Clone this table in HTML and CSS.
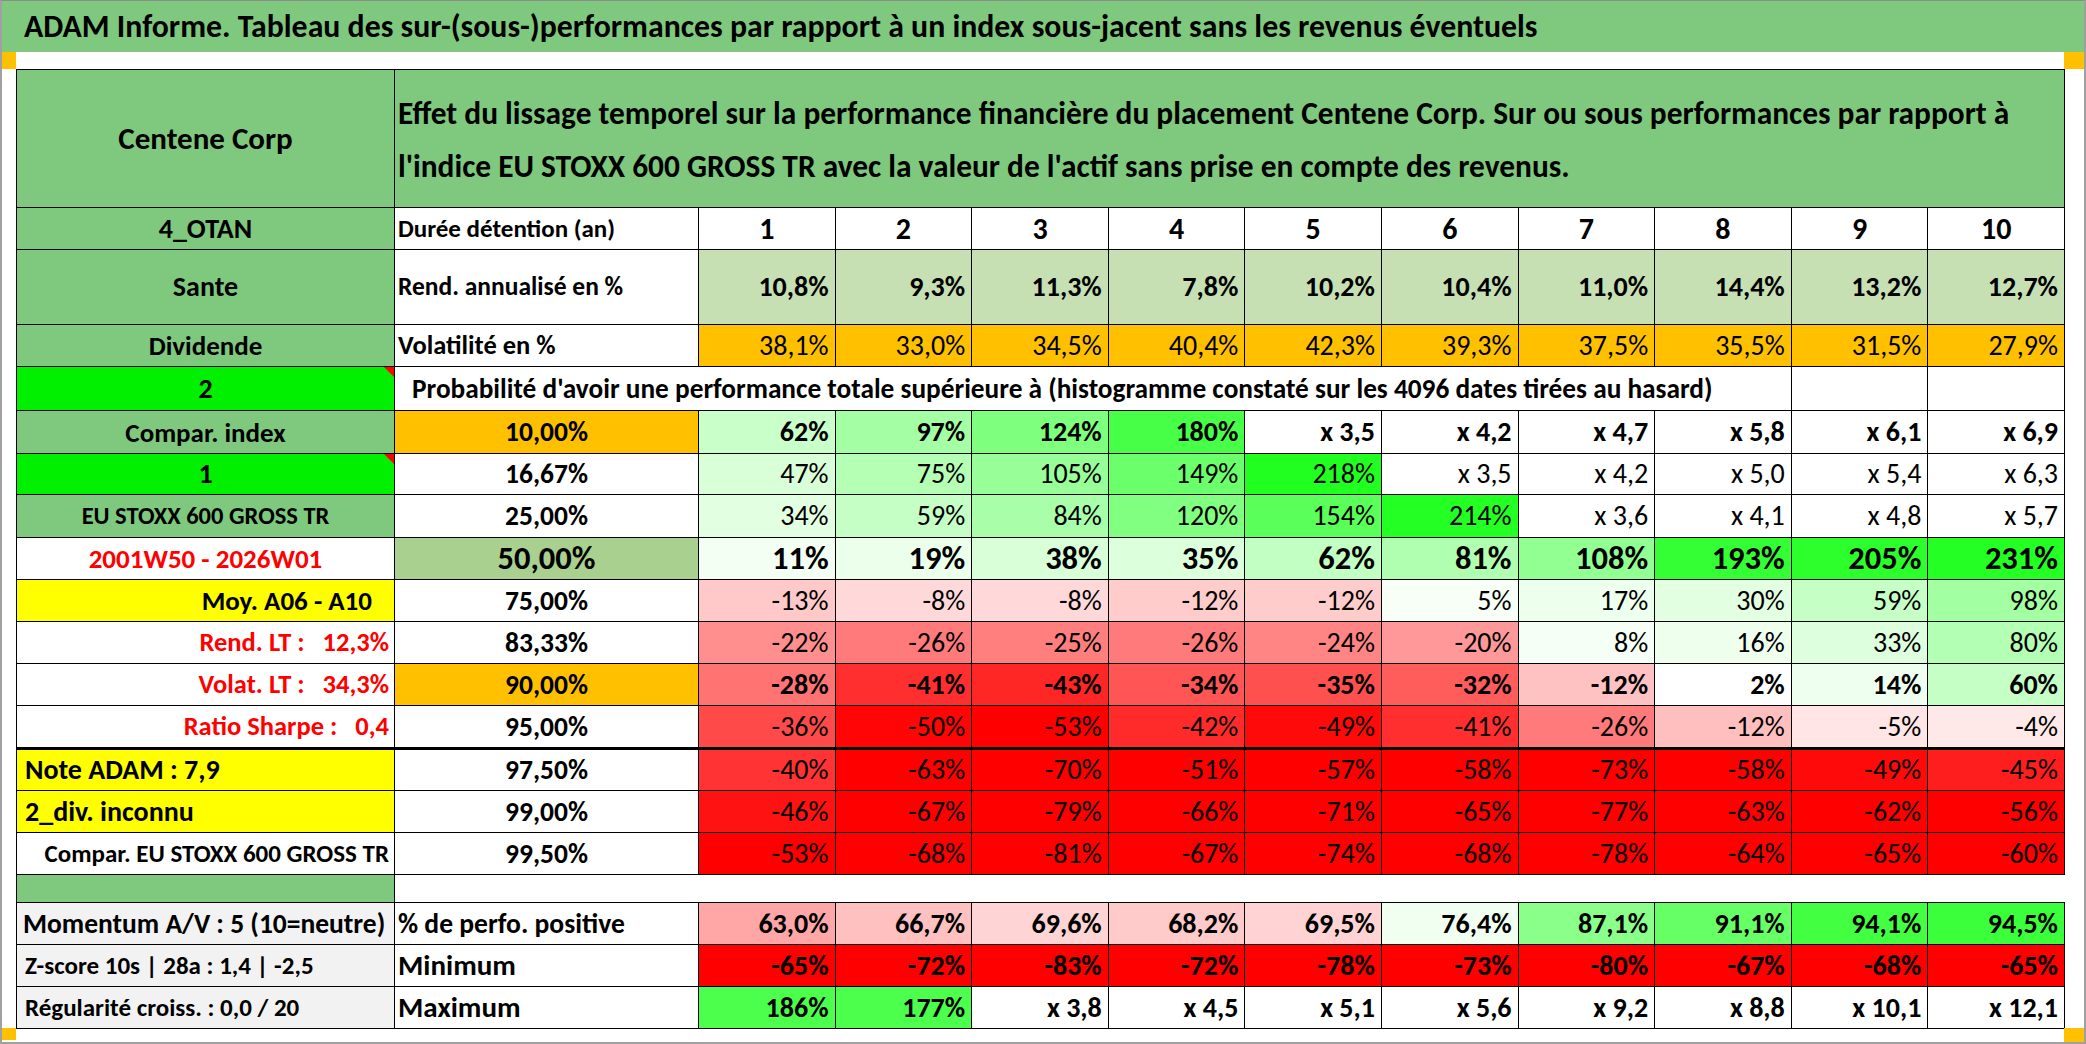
FILE: index.html
```html
<!DOCTYPE html>
<html lang="fr">
<head>
<meta charset="utf-8">
<title>ADAM Informe</title>
<link rel="stylesheet" href="styles.css">
</head>
<body>
<div class="frame">
  <div class="title">ADAM Informe. Tableau des sur-(sous-)performances par rapport à un index sous-jacent sans les revenus éventuels</div>
  <div class="gap"><span class="mark"></span><span class="mark mark-r"></span></div>
  <div class="wrap">
    <table class="sheet">
      <colgroup>
        <col class="w1"><col class="w2">
        <col><col><col><col><col><col><col><col><col><col>
      </colgroup>
      <tr class="r-head">
        <td class="green name">Centene Corp</td>
        <td class="green head" colspan="11">Effet du lissage temporel sur la performance financière du placement Centene Corp. Sur ou sous performances par rapport à<br>l'indice EU STOXX 600 GROSS TR avec la valeur de l'actif sans prise en compte des revenus.</td>
      </tr>
      <tr>
        <td class="green lab">4_OTAN</td>
        <td class="lab2 s-dur">Durée détention (an)</td>
        <td class="hn">1</td><td class="hn">2</td><td class="hn">3</td><td class="hn">4</td><td class="hn">5</td><td class="hn">6</td><td class="hn">7</td><td class="hn">8</td><td class="hn">9</td><td class="hn">10</td>
      </tr>
      <tr class="r-tall">
        <td class="green lab">Sante</td>
        <td class="lab2 s-rend">Rend. annualisé en %</td>
        <td class="v b lg">10,8%</td><td class="v b lg">9,3%</td><td class="v b lg">11,3%</td><td class="v b lg">7,8%</td><td class="v b lg">10,2%</td><td class="v b lg">10,4%</td><td class="v b lg">11,0%</td><td class="v b lg">14,4%</td><td class="v b lg">13,2%</td><td class="v b lg">12,7%</td>
      </tr>
      <tr>
        <td class="green lab s27">Dividende</td>
        <td class="lab2 s-vol">Volatilité en %</td>
        <td class="v or">38,1%</td><td class="v or">33,0%</td><td class="v or">34,5%</td><td class="v or">40,4%</td><td class="v or">42,3%</td><td class="v or">39,3%</td><td class="v or">37,5%</td><td class="v or">35,5%</td><td class="v or">31,5%</td><td class="v or">27,9%</td>
      </tr>
      <tr class="r-44">
        <td class="lime lab flag">2</td>
        <td class="prob" colspan="9">Probabilité d'avoir une performance totale supérieure à (histogramme constaté sur les 4096 dates tirées au hasard)</td>
        <td></td><td></td>
      </tr>
      <tr class="r-43">
        <td class="green lab s27">Compar. index</td>
        <td class="pc or">10,00%</td>
        <td class="v b" style="background:#c9ffc9">62%</td><td class="v b" style="background:#a4ffa4">97%</td><td class="v b" style="background:#7eff7e">124%</td><td class="v b" style="background:#48ff48">180%</td><td class="v b">x 3,5</td><td class="v b">x 4,2</td><td class="v b">x 4,7</td><td class="v b">x 5,8</td><td class="v b">x 6,1</td><td class="v b">x 6,9</td>
      </tr>
      <tr class="r-41">
        <td class="lime lab flag">1</td>
        <td class="pc">16,67%</td>
        <td class="v" style="background:#d9ffd9">47%</td><td class="v" style="background:#b4ffb4">75%</td><td class="v" style="background:#98ff98">105%</td><td class="v" style="background:#6bff6b">149%</td><td class="v" style="background:#20ff20">218%</td><td class="v">x 3,5</td><td class="v">x 4,2</td><td class="v">x 5,0</td><td class="v">x 5,4</td><td class="v">x 6,3</td>
      </tr>
      <tr class="r-43">
        <td class="green lab small">EU STOXX 600 GROSS TR</td>
        <td class="pc">25,00%</td>
        <td class="v" style="background:#e2ffe2">34%</td><td class="v" style="background:#c6ffc6">59%</td><td class="v" style="background:#a9ffa9">84%</td><td class="v" style="background:#80ff80">120%</td><td class="v" style="background:#5aff5a">154%</td><td class="v" style="background:#24ff24">214%</td><td class="v">x 3,6</td><td class="v">x 4,1</td><td class="v">x 4,8</td><td class="v">x 5,7</td>
      </tr>
      <tr>
        <td class="lab red s27">2001W50 - 2026W01</td>
        <td class="pc big sage">50,00%</td>
        <td class="v b big" style="background:#f3fff3">11%</td><td class="v b big" style="background:#ebffeb">19%</td><td class="v b big" style="background:#d8ffd8">38%</td><td class="v b big" style="background:#dcffdc">35%</td><td class="v b big" style="background:#c2ffc2">62%</td><td class="v b big" style="background:#b0ffb0">81%</td><td class="v b big" style="background:#92ff92">108%</td><td class="v b big" style="background:#34ff34">193%</td><td class="v b big" style="background:#2cff2c">205%</td><td class="v b big" style="background:#24ff24">231%</td>
      </tr>
      <tr>
        <td class="yellow lab moy">Moy. A06 - A10</td>
        <td class="pc">75,00%</td>
        <td class="v" style="background:#ffc9c9">-13%</td><td class="v" style="background:#ffd9d9">-8%</td><td class="v" style="background:#ffd9d9">-8%</td><td class="v" style="background:#ffcccc">-12%</td><td class="v" style="background:#ffcccc">-12%</td><td class="v" style="background:#f7fff7">5%</td><td class="v" style="background:#edffed">17%</td><td class="v" style="background:#e2ffe2">30%</td><td class="v" style="background:#c6ffc6">59%</td><td class="v" style="background:#a2ffa2">98%</td>
      </tr>
      <tr>
        <td class="lab red right">Rend. LT :   12,3%</td>
        <td class="pc">83,33%</td>
        <td class="v" style="background:#ff8f8f">-22%</td><td class="v" style="background:#ff7a7a">-26%</td><td class="v" style="background:#ff7f7f">-25%</td><td class="v" style="background:#ff7a7a">-26%</td><td class="v" style="background:#ff8484">-24%</td><td class="v" style="background:#ff9999">-20%</td><td class="v" style="background:#f6fff6">8%</td><td class="v" style="background:#eeffee">16%</td><td class="v" style="background:#ddffdd">33%</td><td class="v" style="background:#b3ffb3">80%</td>
      </tr>
      <tr>
        <td class="lab red right">Volat. LT :   34,3%</td>
        <td class="pc or">90,00%</td>
        <td class="v b" style="background:#ff7373">-28%</td><td class="v b" style="background:#ff2f2f">-41%</td><td class="v b" style="background:#ff2626">-43%</td><td class="v b" style="background:#ff5555">-34%</td><td class="v b" style="background:#ff5050">-35%</td><td class="v b" style="background:#ff5c5c">-32%</td><td class="v b" style="background:#ffc2c2">-12%</td><td class="v b">2%</td><td class="v b" style="background:#efffef">14%</td><td class="v b" style="background:#c6ffc6">60%</td>
      </tr>
      <tr class="r-43 thick">
        <td class="lab red right">Ratio Sharpe :   0,4</td>
        <td class="pc">95,00%</td>
        <td class="v" style="background:#ff4a4a">-36%</td><td class="v" style="background:#ff0505">-50%</td><td class="v" style="background:#ff0000">-53%</td><td class="v" style="background:#ff2b2b">-42%</td><td class="v" style="background:#ff0a0a">-49%</td><td class="v" style="background:#ff2f2f">-41%</td><td class="v" style="background:#ff7a7a">-26%</td><td class="v" style="background:#ffbfbf">-12%</td><td class="v" style="background:#ffe5e5">-5%</td><td class="v" style="background:#ffe8e8">-4%</td>
      </tr>
      <tr>
        <td class="yellow lab left">Note ADAM : 7,9</td>
        <td class="pc">97,50%</td>
        <td class="v" style="background:#ff3333">-40%</td><td class="v" style="background:#ff0000">-63%</td><td class="v" style="background:#ff0000">-70%</td><td class="v" style="background:#ff0000">-51%</td><td class="v" style="background:#ff0000">-57%</td><td class="v" style="background:#ff0000">-58%</td><td class="v" style="background:#ff0000">-73%</td><td class="v" style="background:#ff0000">-58%</td><td class="v" style="background:#ff0a0a">-49%</td><td class="v" style="background:#ff1e1e">-45%</td>
      </tr>
      <tr>
        <td class="yellow lab left">2_div. inconnu</td>
        <td class="pc">99,00%</td>
        <td class="v" style="background:#ff1212">-46%</td><td class="v" style="background:#ff0000">-67%</td><td class="v" style="background:#ff0000">-79%</td><td class="v" style="background:#ff0000">-66%</td><td class="v" style="background:#ff0000">-71%</td><td class="v" style="background:#ff0000">-65%</td><td class="v" style="background:#ff0000">-77%</td><td class="v" style="background:#ff0000">-63%</td><td class="v" style="background:#ff0000">-62%</td><td class="v" style="background:#ff0000">-56%</td>
      </tr>
      <tr>
        <td class="lab right cmp">Compar. EU STOXX 600 GROSS TR</td>
        <td class="pc">99,50%</td>
        <td class="v" style="background:#ff0000">-53%</td><td class="v" style="background:#ff0000">-68%</td><td class="v" style="background:#ff0000">-81%</td><td class="v" style="background:#ff0000">-67%</td><td class="v" style="background:#ff0000">-74%</td><td class="v" style="background:#ff0000">-68%</td><td class="v" style="background:#ff0000">-78%</td><td class="v" style="background:#ff0000">-64%</td><td class="v" style="background:#ff0000">-65%</td><td class="v" style="background:#ff0000">-60%</td>
      </tr>
      <tr class="r-blank">
        <td class="green"></td>
        <td class="blank" colspan="11"></td>
      </tr>
      <tr>
        <td class="grey lab left mom">Momentum A/V : 5 (10=neutre)</td>
        <td class="lab2 s-perf">% de perfo. positive</td>
        <td class="v b lg2" style="background:#ffa6a6">63,0%</td><td class="v b lg2" style="background:#ffc0c0">66,7%</td><td class="v b lg2" style="background:#ffd4d4">69,6%</td><td class="v b lg2" style="background:#ffcaca">68,2%</td><td class="v b lg2" style="background:#ffd3d3">69,5%</td><td class="v b lg2" style="background:#f0fff0">76,4%</td><td class="v b lg2" style="background:#8aff8a">87,1%</td><td class="v b lg2" style="background:#66ff66">91,1%</td><td class="v b lg2" style="background:#42ff42">94,1%</td><td class="v b lg2" style="background:#3cff3c">94,5%</td>
      </tr>
      <tr>
        <td class="grey lab left">Z-score 10s | 28a : 1,4 | -2,5</td>
        <td class="lab2 mm">Minimum</td>
        <td class="v b lg2 red-bg">-65%</td><td class="v b lg2 red-bg">-72%</td><td class="v b lg2 red-bg">-83%</td><td class="v b lg2 red-bg">-72%</td><td class="v b lg2 red-bg">-78%</td><td class="v b lg2 red-bg">-73%</td><td class="v b lg2 red-bg">-80%</td><td class="v b lg2 red-bg">-67%</td><td class="v b lg2 red-bg">-68%</td><td class="v b lg2 red-bg">-65%</td>
      </tr>
      <tr>
        <td class="grey lab left">Régularité croiss. : 0,0 / 20</td>
        <td class="lab2 mm">Maximum</td>
        <td class="v b lg2" style="background:#4dff4d">186%</td><td class="v b lg2" style="background:#4dff4d">177%</td><td class="v b lg2">x 3,8</td><td class="v b lg2">x 4,5</td><td class="v b lg2">x 5,1</td><td class="v b lg2">x 5,6</td><td class="v b lg2">x 9,2</td><td class="v b lg2">x 8,8</td><td class="v b lg2">x 10,1</td><td class="v b lg2">x 12,1</td>
      </tr>
    </table>
  </div>
  <div class="foot"><span class="mark"></span><span class="mark mark-r"></span></div>
</div>
</body>
</html>
```

FILE: styles.css
```css
* { box-sizing: border-box; }
html, body { margin: 0; padding: 0; }
body {
  width: 2086px;
  height: 1044px;
  overflow: hidden;
  background: #ffffff;
  font-family: Carlito, "Liberation Sans Narrow", "DejaVu Sans Condensed", sans-serif;
  color: #000;
}
.frame {
  width: 2086px;
  height: 1044px;
  border-left: 2px solid #a0a0a0;
  border-right: 2px solid #a0a0a0;
  border-top: 1px solid #8c8c8c;
  border-bottom: 2px solid #a0a0a0;
  display: flex;
  flex-direction: column;
}
.title {
  height: 51px;
  background: #7fc97f;
  font-size: 31.8px;
  font-weight: bold;
  line-height: 51px;
  padding-left: 22px;
  white-space: nowrap;
}
.gap, .foot {
  display: flex;
  justify-content: space-between;
  align-items: flex-start;
}
.gap { height: 17px; }
.gap .mark { width: 14px; height: 17px; background: #ffc000; }
.gap .mark-r { width: 20px; }
.foot { height: 14px; }
.foot .mark { width: 14px; height: 12px; background: #ffc000; }
.foot .mark-r { width: 20px; height: 14px; }
.wrap { padding-left: 14px; height: 959px; }
.sheet {
  border-collapse: collapse;
  table-layout: fixed;
  width: 2049px;
}
.w1 { width: 378px; }
.w2 { width: 304px; }
.sheet td {
  border: 1px solid #000;
  padding: 0 7px;
  font-size: 27px;
  line-height: 1;
  white-space: nowrap;
  overflow: hidden;
  vertical-align: middle;
  height: 42px;
}
.sheet tr.r-head td { height: 138px; }
.sheet tr.r-tall td { height: 75px; }
.sheet tr.r-44 td { height: 44px; }
.sheet tr.r-43 td { height: 43px; }
.sheet tr.r-41 td { height: 41px; }
.sheet tr.r-blank td { height: 28px; }
.sheet tr.thick td { border-bottom: 3px solid #000; }

.green { background: #7fc97f; }
.lime { background: #00f000; }
.yellow { background: #ffff00; }
.grey { background: #f2f2f2; }
.or { background: #ffc000; }
.lg { background: #c6e0b4; }
.sage { background: #a9d08e; }
.red-bg { background: #ff0000; }

.sheet td.name { text-align: center; font-weight: bold; font-size: 31px; }
.sheet td.head {
  font-weight: bold;
  font-size: 31.4px;
  line-height: 53px;
  padding-left: 3px;
  padding-top: 2px;
}
.lab { text-align: center; font-weight: bold; }
.sheet td.lab { font-size: 28px; }
.sheet td.s27 { font-size: 27px; }
.sheet td.small { font-size: 24.5px; }
.lab.red { color: #ff0000; }
.sheet td.right { text-align: right; white-space: pre; padding-right: 5px; font-size: 26.5px; }
.lab.left { text-align: left; padding-left: 8px; }
.sheet td.moy { text-align: right; padding-right: 22px; font-size: 27px; }
.sheet td.cmp { font-size: 25px; }
.sheet td.grey { font-size: 25px; }
.sheet td.grey.mom { font-size: 27.5px; padding-left: 6px; }
.lab2 { text-align: left; font-weight: bold; }
.sheet td.lab2 { padding-left: 3px; }
.sheet td.s-dur { font-size: 25px; }
.sheet td.s-rend { font-size: 25.5px; }
.sheet td.s-vol { font-size: 26.5px; }
.sheet td.s-perf { font-size: 27.6px; }
.sheet td.prob { text-align: left; font-weight: bold; padding-left: 17px; overflow: visible; font-size: 27.3px; }
.sheet td.hn { text-align: center; font-weight: bold; font-size: 30px; }
.pc { text-align: center; font-weight: bold; }
.sheet td.pc { font-size: 27.5px; }
.v { text-align: right; }
.sheet td.v { padding-right: 6px; font-size: 28px; }
.b { font-weight: bold; }
.sheet td.big { font-size: 32.5px; }
.sheet td.lg2 { font-size: 28px; }
.sheet td.mm { font-size: 29px; }
.blank { border-left: 1px solid #000; border-right: none !important; border-bottom: 1px solid #000; }

.flag { position: relative; }
.flag::after {
  content: "";
  position: absolute;
  top: 0;
  right: 0;
  width: 0;
  height: 0;
  border-top: 10px solid #ff0000;
  border-left: 10px solid transparent;
}
```
